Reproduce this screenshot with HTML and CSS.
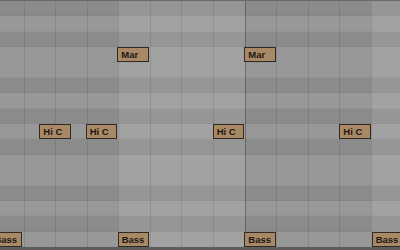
FILE: index.html
```html
<!DOCTYPE html>
<html>
<head>
<meta charset="utf-8">
<link rel="stylesheet" href="styles.css">
</head>
<body>
<div class="roll">
  <div class="rows">
    <div class="row black"></div>
    <div class="row white"></div>
    <div class="row black"></div>
    <div class="row white"></div>
    <div class="row white"></div>
    <div class="row black"></div>
    <div class="row white"></div>
    <div class="row black"></div>
    <div class="row white"></div>
    <div class="row black"></div>
    <div class="row white"></div>
    <div class="row white"></div>
    <div class="row black"></div>
    <div class="row white"></div>
    <div class="row black"></div>
    <div class="row white"></div>
  </div>
  <div class="cols">
    <div class="col first"></div>
    <div class="col"></div>
    <div class="col"></div>
    <div class="col"></div>
    <div class="col lit"></div>
    <div class="col lit"></div>
    <div class="col lit"></div>
    <div class="col lit"></div>
    <div class="col bar"></div>
    <div class="col"></div>
    <div class="col"></div>
    <div class="col"></div>
    <div class="col lit"></div>
  </div>
  <div class="notes">
    <div class="note" style="--x:117.3px; --r:3">Mar</div>
    <div class="note" style="--x:244.3px; --r:3">Mar</div>
    <div class="note" style="--x:39.3px; --r:8">Hi C</div>
    <div class="note" style="--x:85.7px; --r:8">Hi C</div>
    <div class="note" style="--x:212.7px; --r:8">Hi C</div>
    <div class="note" style="--x:339.3px; --r:8">Hi C</div>
    <div class="note" style="--x:-9.6px; --r:15">Bass</div>
    <div class="note" style="--x:117.7px; --r:15">Bass</div>
    <div class="note" style="--x:244.3px; --r:15">Bass</div>
    <div class="note" style="--x:371.7px; --r:15">Bass</div>
  </div>
</div>
</body>
</html>
```

FILE: styles.css
```css
html, body {
  margin: 0;
  padding: 0;
  width: 400px;
  height: 250px;
  overflow: hidden;
  background: #8c8c8c;
}

.roll {
  position: relative;
  width: 400px;
  height: 250px;
  box-sizing: border-box;
  border-top: 1px solid #6a6a6a;
  border-bottom: 3px solid #5e5e5e;
  overflow: hidden;
}

.rows {
  display: flex;
  flex-direction: column;
  height: 100%;
}

.row {
  flex: 1;
  box-shadow: inset 0 -1px 0 rgba(0, 0, 0, 0.03);
}

.row.white {
  background: #989898;
}

.row.black {
  background: #8b8b8b;
}

.cols {
  position: absolute;
  top: 0;
  bottom: 0;
  left: -8.1px;
  display: grid;
  grid-template-columns: repeat(13, 31.6px);
}

.col {
  border-left: 1px solid rgba(0, 0, 0, 0.09);
}

.col.first {
  border-left: none;
}

.col.lit {
  background: rgba(255, 255, 255, 0.1);
}

.col.bar {
  border-left: 1px solid rgba(0, 0, 0, 0.28);
}

.notes {
  position: absolute;
  inset: 0;
}

.note {
  position: absolute;
  left: var(--x);
  top: calc(var(--r) * 15.375px);
  width: 31.6px;
  height: 15px;
  box-sizing: border-box;
  background: #a98866;
  border: 1px solid #2f2a24;
  color: #1d1812;
  font-family: "Liberation Sans", Arial, sans-serif;
  font-weight: bold;
  font-size: 9.5px;
  line-height: 13px;
  padding-left: 3px;
  white-space: nowrap;
  overflow: hidden;
}
```
